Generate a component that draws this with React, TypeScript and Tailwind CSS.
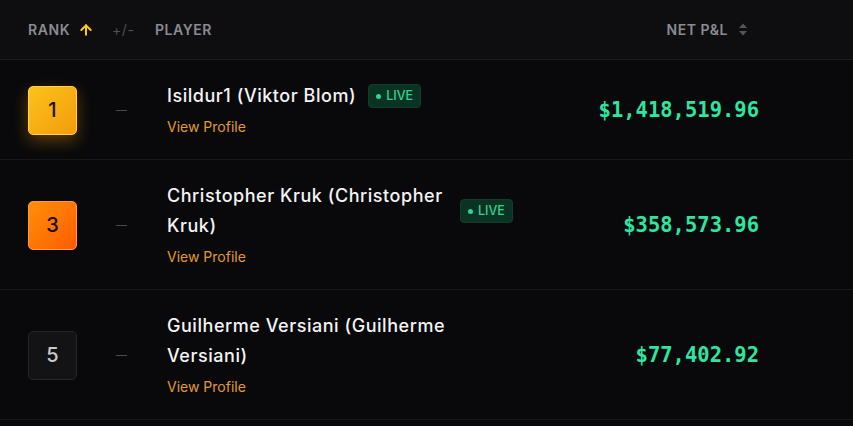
import React from "react";
import { ArrowUp } from "lucide-react";

type Row = {
  rank: number;
  name: string;
  live: boolean;
  value: string;
  kind: "gold" | "orange" | "plain";
};

const rows: Row[] = [
  { rank: 1, name: "Isildur1 (Viktor Blom)", live: true, value: "$1,418,519.96", kind: "gold" },
  { rank: 3, name: "Christopher Kruk (Christopher Kruk)", live: true, value: "$358,573.96", kind: "orange" },
  { rank: 5, name: "Guilherme Versiani (Guilherme Versiani)", live: false, value: "$77,402.92", kind: "plain" },
];

function Badge({ rank, kind }: { rank: number; kind: Row["kind"] }) {
  if (kind === "gold")
    return (
      <div className="flex h-[49px] w-[49px] items-center justify-center rounded-[5px] border border-[#fcd34d] bg-gradient-to-br from-[#fcc21b] to-[#f39c0b] text-[20px] font-medium text-[#1a1208] shadow-[0_6px_16px_rgba(245,158,11,0.35)]">
        {rank}
      </div>
    );
  if (kind === "orange")
    return (
      <div className="flex h-[49px] w-[49px] items-center justify-center rounded-[5px] border border-[#ff9a3c] bg-gradient-to-br from-[#ff8f0a] to-[#ff5a00] text-[20px] font-medium text-[#1a0e05]">
        {rank}
      </div>
    );
  return (
    <div className="flex h-[49px] w-[49px] items-center justify-center rounded-[5px] border border-[#26262a] bg-[#131316] text-[20px] font-medium text-[#c9c9cc]">
      {rank}
    </div>
  );
}

function Live() {
  return (
    <div className="flex h-[24px] shrink-0 items-center gap-[5px] rounded-[4px] border border-[#0f3f2c] bg-[#0a3324] px-[7px] text-[12.5px] font-medium text-[#2fd58f]">
      <span className="h-[5px] w-[5px] rounded-full bg-[#2fd58f]" />
      LIVE
    </div>
  );
}

export default function App() {
  return (
    <div
      className="min-h-[426px] w-[853px] bg-[#09090b]"
      style={{ fontFamily: "Inter, 'Noto Sans', sans-serif" }}
    >
      <div className="flex h-[60px] items-center border-b border-[#1c1c20] bg-[#0e0e11] pl-[28px] pr-[105px] text-[14px] font-semibold tracking-[0.04em] text-[#8b8b91]">
        <div className="flex w-[84px] items-center gap-[8px]">
          RANK
          <ArrowUp size={16} strokeWidth={3} className="text-[#facc15]" />
        </div>
        <div className="w-[43px] font-normal text-[#4f4f55]">+/-</div>
        <div className="flex-1">PLAYER</div>
        <div className="flex items-center gap-[10px]">
          NET P&amp;L
          <svg width="10" height="13" viewBox="0 0 10 13">
            <path d="M5 0.5 L9 5 H1 Z" fill="#55555b" />
            <path d="M5 12.5 L9 8 H1 Z" fill="#55555b" />
          </svg>
        </div>
      </div>
      {rows.map((r) => (
        <div
          key={r.rank}
          className="flex items-center border-b border-[#18181b] pt-[21px] pb-[20px] pl-[28px] pr-[94px]"
        >
          <div className="w-[84px]">
            <Badge rank={r.rank} kind={r.kind} />
          </div>
          <div className="w-[55px]">
            <div className="ml-[4px] h-px w-[11px] bg-[#4a4a50]" />
          </div>
          <div className="flex-1">
            <div className="flex items-center gap-[12px]">
              <div className="max-w-[281px] text-[18px] font-medium leading-[30px] tracking-[0.03em] text-[#f4f4f5]">
                {r.name}
              </div>
              {r.live && <Live />}
            </div>
            <div className="mt-[4px] text-[14px] leading-[24px] text-[#e09a2a]">View Profile</div>
          </div>
          <div
            className="text-right text-[20.5px] font-bold text-[#2ee6a0]"
            style={{ fontFamily: "'DejaVu Sans Mono', monospace" }}
          >
            {r.value}
          </div>
        </div>
      ))}
    </div>
  );
}
